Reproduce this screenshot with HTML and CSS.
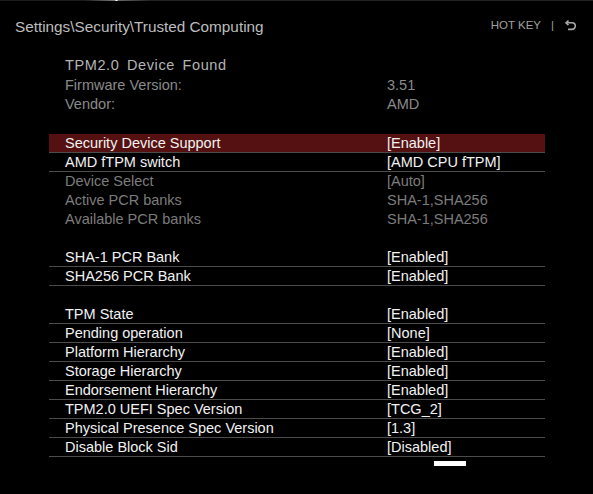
FILE: index.html
```html
<!DOCTYPE html>
<html>
<head>
<meta charset="utf-8">
<link rel="stylesheet" href="styles.css">
</head>
<body>
<div class="topline"></div>
<header class="header">
  <div class="title">Settings\Security\Trusted Computing</div>
  <div class="hotkey">
    <span>HOT KEY</span>
    <span class="sep">|</span>
    <svg class="back" width="12" height="12" viewBox="0 0 12 12">
      <path d="M3.5 1.5 L1 3.8 L3.5 6.1" fill="none" stroke="#a8a8a8" stroke-width="1.6"/>
      <path d="M1.5 3.8 H7 A3.3 3.3 0 0 1 7 10.4 H3" fill="none" stroke="#a8a8a8" stroke-width="1.6"/>
    </svg>
  </div>
</header>
<main class="content">
  <div class="info">
    <div class="info-title">TPM2.0 Device Found</div>
    <div class="info-row"><span>Firmware Version:</span><span>3.51</span></div>
    <div class="info-row"><span>Vendor:</span><span>AMD</span></div>
  </div>
  <div class="list">
    <div class="row selected"><span>Security Device Support</span><span>[Enable]</span></div>
    <div class="row"><span>AMD fTPM switch</span><span>[AMD CPU fTPM]</span></div>
    <div class="row dim"><span>Device Select</span><span>[Auto]</span></div>
    <div class="row dim"><span>Active PCR banks</span><span>SHA-1,SHA256</span></div>
    <div class="row dim"><span>Available PCR banks</span><span>SHA-1,SHA256</span></div>
    <div class="row blank"></div>
    <div class="row"><span>SHA-1 PCR Bank</span><span>[Enabled]</span></div>
    <div class="row"><span>SHA256 PCR Bank</span><span>[Enabled]</span></div>
    <div class="row blank"></div>
    <div class="row"><span>TPM State</span><span>[Enabled]</span></div>
    <div class="row"><span>Pending operation</span><span>[None]</span></div>
    <div class="row"><span>Platform Hierarchy</span><span>[Enabled]</span></div>
    <div class="row"><span>Storage Hierarchy</span><span>[Enabled]</span></div>
    <div class="row"><span>Endorsement Hierarchy</span><span>[Enabled]</span></div>
    <div class="row"><span>TPM2.0 UEFI Spec Version</span><span>[TCG_2]</span></div>
    <div class="row"><span>Physical Presence Spec Version</span><span>[1.3]</span></div>
    <div class="row"><span>Disable Block Sid</span><span>[Disabled]</span></div>
  </div>
  <div class="scroll"></div>
</main>
</body>
</html>
```
FILE: styles.css
```css
html, body {
  margin: 0;
  padding: 0;
  background: #000;
  width: 593px;
  height: 494px;
  overflow: hidden;
  font-family: "Liberation Sans", Arial, sans-serif;
}
.topline {
  height: 1px;
  background: linear-gradient(to right, #1c1c1c 0, #1c1c1c 85px, #7a7a7a 115px, #ffffff 116px, #ffffff 117px, #6a6a6a 118px, #222 150px, #222 100%);
}
.header {
  height: 53px;
  display: flex;
  justify-content: space-between;
  align-items: flex-start;
  padding: 17px 0 0 15px;
  box-sizing: border-box;
}
.title {
  font-size: 15.3px;
  line-height: 18px;
  color: #bdbdbd;
}
.hotkey {
  display: flex;
  align-items: center;
  margin-top: -2px;
  height: 18px;
  font-size: 11.5px;
  color: #a0a0a0;
  padding-right: 16px;
}
.hotkey .sep {
  margin: 0 11px 0 10px;
}
.back {
  display: block;
}
.content {
  padding-left: 49px;
  width: 496px;
}
.info {
  padding-left: 16px;
  height: 80px;
  padding-top: 1px;
  box-sizing: border-box;
  color: #8a8a8a;
  font-size: 14.5px;
}
.info-title {
  line-height: 20px;
  height: 21px;
  color: #b4b4b4;
  letter-spacing: 0.6px;
  word-spacing: 3px;
}
.info-row {
  display: grid;
  grid-template-columns: 322px 1fr;
  line-height: 19px;
}
.list {
  display: flex;
  flex-direction: column;
}
.row {
  display: grid;
  grid-template-columns: 322px 1fr;
  padding-left: 16px;
  height: 18px;
  line-height: 18px;
  border-bottom: 1px solid #4c4c4c;
  font-size: 14.5px;
  color: #f2f2f2;
}
.row.selected {
  background: #551111;
}
.row.dim {
  color: #7c7c7c;
  border-bottom-color: transparent;
}
.row.blank {
  border-bottom-color: transparent;
}
.scroll {
  margin: 4px 0 0 385px;
  width: 32px;
  height: 5px;
  background: #fff;
}
```
